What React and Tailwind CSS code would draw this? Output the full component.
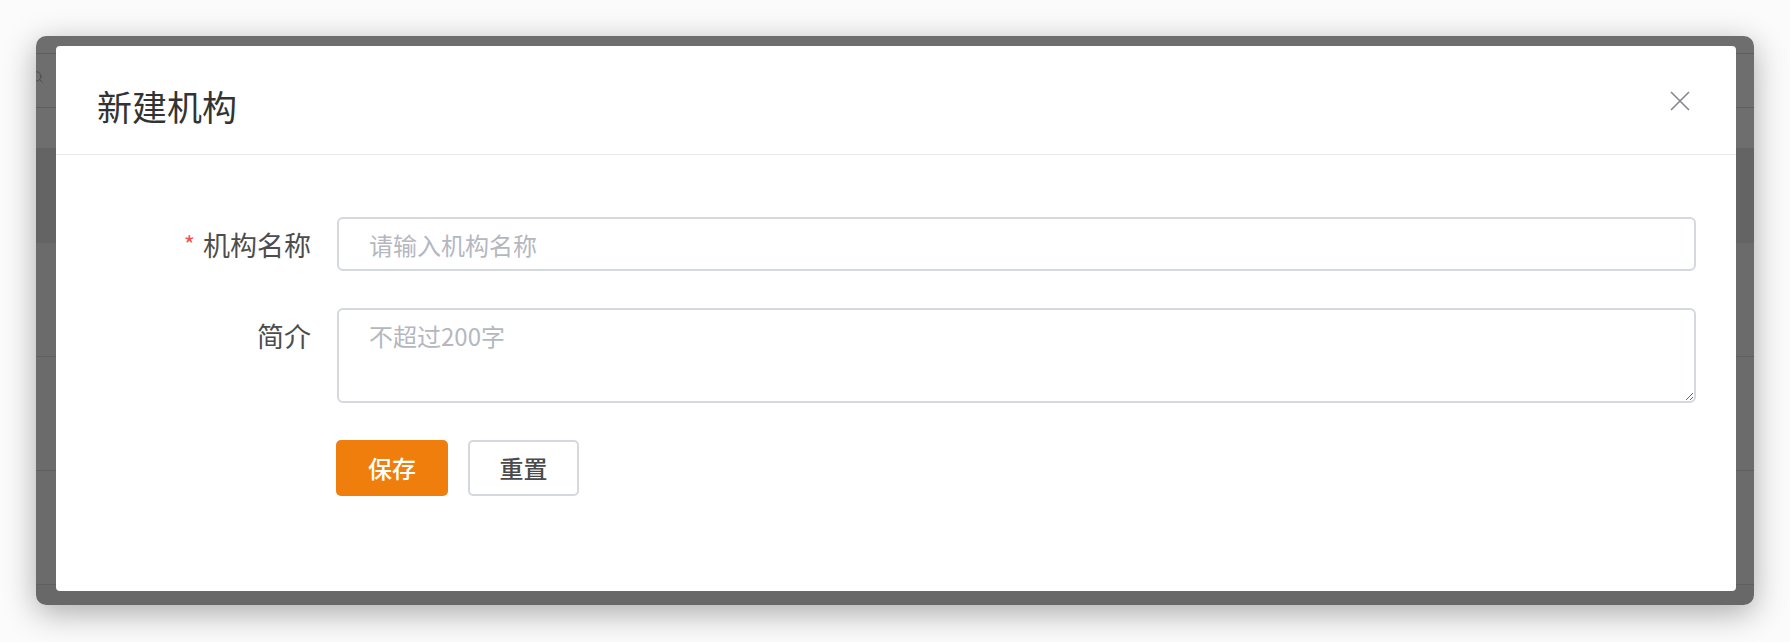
import React from "react";
import { Search } from "lucide-react";

function BackgroundPage() {
  return (
    <div className="flex flex-col h-full">
      <div className="h-[18px] bg-[#6e6e6e] border-b border-[#5e5e5e]"></div>
      <div className="h-[54px] bg-[#6e6e6e] border-b border-[#5e5e5e] relative">
        <Search className="absolute left-[-6px] top-[16px] w-[14px] h-[14px] text-[#4a4a4a]" strokeWidth={1.5} />
      </div>
      <div className="h-[40px] bg-[#6e6e6e]"></div>
      <div className="h-[95px] bg-[#646464]"></div>
      <div className="h-[114px] bg-[#6b6b6b] border-b border-[#5f5f5f]"></div>
      <div className="h-[114px] bg-[#6b6b6b] border-b border-[#5f5f5f]"></div>
      <div className="h-[114px] bg-[#6b6b6b] border-b border-[#5f5f5f]"></div>
      <div className="flex-1 bg-[#686868]"></div>
    </div>
  );
}

function CloseIcon() {
  return (
    <svg width="20" height="20" viewBox="0 0 20 20" fill="none">
      <path d="M1 1L19 19M19 1L1 19" stroke="#86878d" strokeWidth="1.6" />
    </svg>
  );
}

export default function App() {
  return (
    <div className="w-[1790px] h-[642px] bg-[#fbfbfb] pt-[36px] pb-[37px] px-[36px] font-['Noto_Sans_CJK_SC',sans-serif]">
      <div className="relative h-full rounded-[10px] overflow-hidden shadow-[0_8px_32px_rgba(0,0,0,0.32)]">
        <BackgroundPage />

        {/* modal */}
        <div className="absolute left-[20px] top-[10px] right-[18px] bottom-[14px] bg-white rounded-[4px] flex flex-col">
          <div className="h-[109px] flex items-center justify-between pl-[41px] pr-[46px] pt-[10px] border-b border-[#e9e9ef]">
            <h2 className="text-[35px] leading-none text-[#333333]">新建机构</h2>
            <button className="mt-[-8px]">
              <CloseIcon />
            </button>
          </div>

          <div className="pt-[62px] pr-[40px] flex flex-col gap-[37px]">
            <div className="flex items-center gap-[26px]">
              <label className="w-[255px] text-right text-[27px] leading-none text-[#4d4d4d]">
                <span className="text-[#f5504f] text-[24px] mr-[8px] relative top-[-2px]">*</span>
                机构名称
              </label>
              <input
                className="flex-1 h-[54px] border-2 border-[#d6d8df] rounded-[6px] pl-[30px] text-[24px] outline-none placeholder:text-[#b5b7bf]"
                placeholder="请输入机构名称"
              />
            </div>

            <div className="flex items-start gap-[26px]">
              <label className="w-[255px] text-right text-[27px] leading-none text-[#4d4d4d] pt-[14px]">
                简介
              </label>
              <textarea
                className="flex-1 h-[95px] border-2 border-[#d6d8df] rounded-[6px] pl-[30px] pt-[8px] text-[24px] leading-[36px] outline-none placeholder:text-[#b5b7bf]"
                placeholder="不超过200字"
              ></textarea>
            </div>

            <div className="flex gap-[20px] pl-[280px]">
              <button className="w-[112px] h-[56px] rounded-[5px] bg-[#ef7e0c] text-white text-[24px] font-medium">
                保存
              </button>
              <button className="w-[111px] h-[56px] rounded-[5px] border-2 border-[#d6d8df] bg-white text-[#4a4a4a] text-[24px] font-medium">
                重置
              </button>
            </div>
          </div>
        </div>
      </div>
    </div>
  );
}
